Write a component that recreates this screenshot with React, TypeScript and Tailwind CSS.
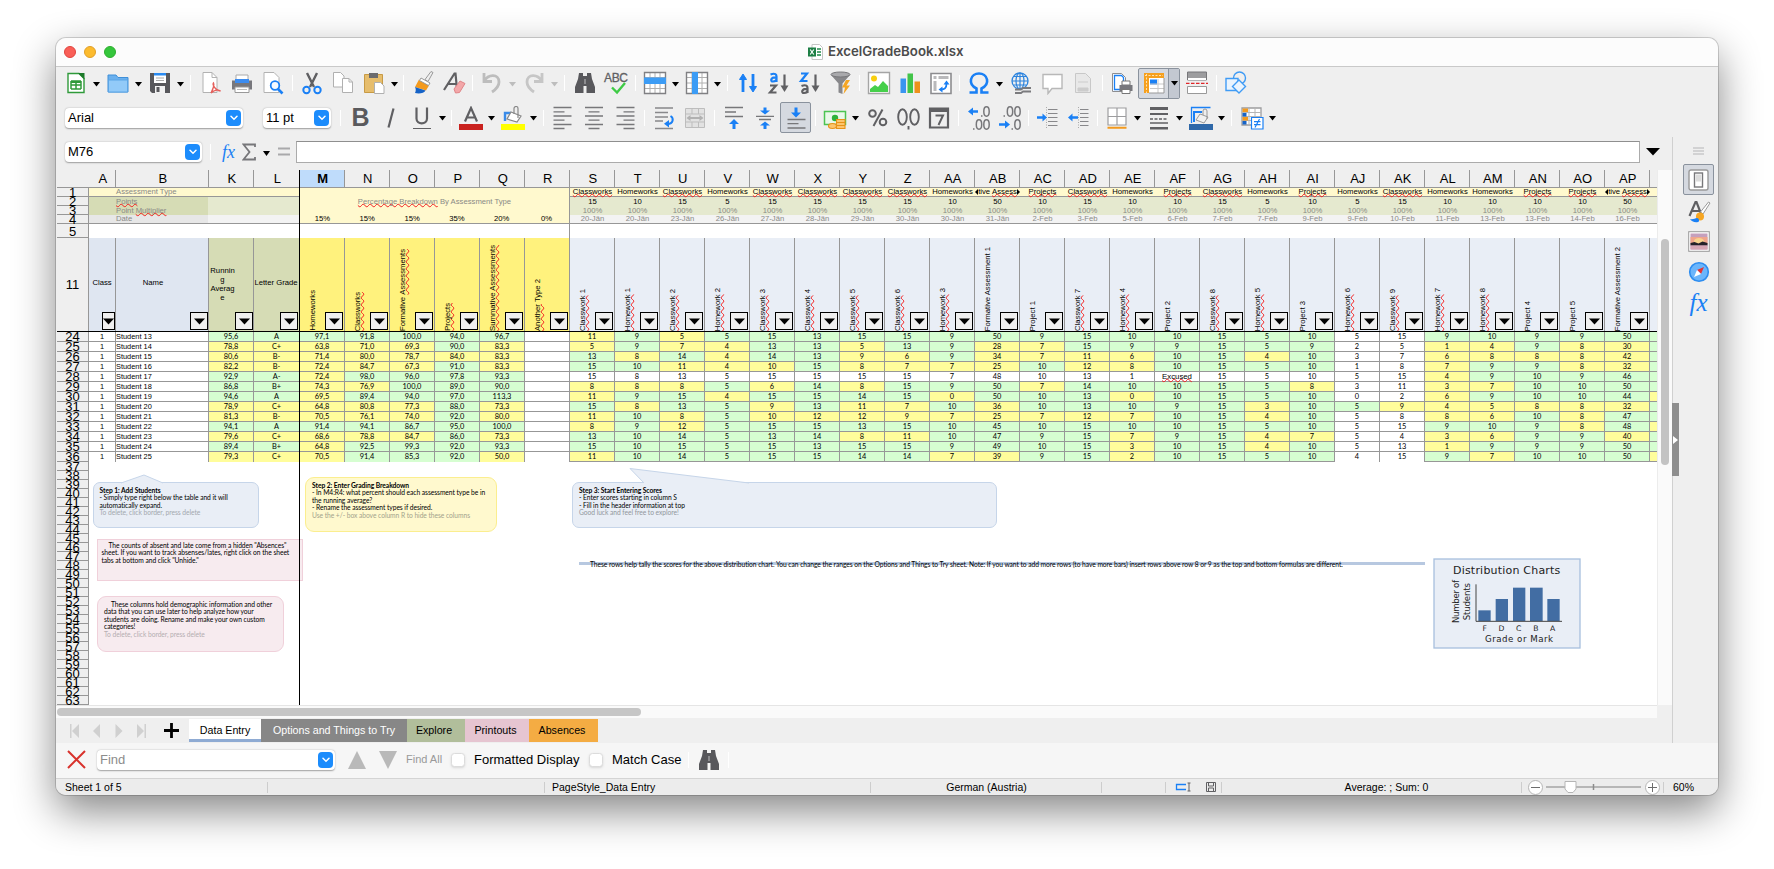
import type { ReactNode } from "react";

/* ---------- toolbar icons, 24 x 24 ---------- */

const G = "#606063";
const B = "#1a80f5";

const icons: Record<string, ReactNode> = {
  new: (
    <g>
      <path d="M4 2.500h11l5 5V21.500H4z" fill="#fff" stroke="#2f9a3a" strokeWidth="1.400" />
      <path d="M14 2l6.500 6.500V2z" fill="#1d7a2a" />
      <path d="M7 10h10M7 14h10M7 18h10M7 10v8M12 10v8M17 10v8" stroke="#2f9a3a" strokeWidth="1.500" />
      <path d="M7 10h10v2H7z" fill="#2f9a3a" />
    </g>
  ),
  open: (
    <g>
      <path d="M2 4h8l2 2.500h10V21H2z" fill="#6ab0ee" stroke="#3f8fd8" />
      <path d="M2.500 9h19v12h-19z" fill="#92caf8" stroke="#5ba5e6" />
    </g>
  ),
  save: (
    <g>
      <path d="M2 2h20v20H4l-2-2z" fill="#58585c" />
      <path d="M6 3h12v9H6z" fill="#fff" />
      <path d="M6 2h12v2.500H6z" fill="#2a8bf2" />
      <path d="M8 7h8M8 9.500h8" stroke="#aaa" />
      <path d="M7 15h10v7H7z" fill="#f2f2f2" />
      <path d="M8.500 16h3v5h-3z" fill="#58585c" />
    </g>
  ),
  pdf: (
    <g>
      <path d="M4 1.500h9l5 5v15H4z" fill="#fff" stroke="#b2b2b2" />
      <path d="M13 1.500v5h5" fill="none" stroke="#b2b2b2" />
      <path d="M12 22c2-4 3.500-8 2.500-10-1.200 1.500 1.500 7.500 7 8-3-1.500-7-.5-9.500 2z" fill="none" stroke="#e5605c" strokeWidth="1.400" />
    </g>
  ),
  print: (
    <g>
      <path d="M6 4h12v5H6z" fill="#fff" stroke="#aaa" />
      <path d="M2 9.500h20v9H2z" fill="#77777c" />
      <path d="M5 8h14v4H5z" fill="#3b8cf0" />
      <path d="M5 16h14v5.500H5z" fill="#fff" stroke="#999" />
      <path d="M7 18.500h10" stroke="#bbb" />
    </g>
  ),
  preview: (
    <g>
      <path d="M3 1.500h10l5 5v15H3z" fill="#fff" stroke="#b2b2b2" />
      <circle cx="14" cy="14.500" r="4.300" fill="#f5faff" stroke={B} strokeWidth="1.800" />
      <path d="M17 18l4.500 4.500" stroke={B} strokeWidth="2.600" />
    </g>
  ),
  cut: (
    <g fill="none">
      <path d="M7 2l7 14M17 2l-7 14" stroke={G} strokeWidth="2.400" />
      <circle cx="6.500" cy="19" r="3.200" stroke={B} strokeWidth="2" />
      <circle cx="17.500" cy="19" r="3.200" stroke={B} strokeWidth="2" />
    </g>
  ),
  copy: (
    <g fill="#fff" stroke="#b0b0b0">
      <path d="M2.500 1.500h7l3.500 3.500v11H2.500z" />
      <path d="M11.500 7.500h6.500l3.500 3.500v10.500h-10z" />
      <path d="M18 7.500V11h3.500" fill="none" />
    </g>
  ),
  paste: (
    <g>
      <path d="M2.500 3.500h18v18h-18z" fill="#e6bd6c" stroke="#c79a45" />
      <path d="M7 2h9v5H7z" fill="#6b6b6e" />
      <path d="M12.500 11.500h6l3.500 3.500v7.500h-9.500z" fill="#fff" stroke="#b0b0b0" />
    </g>
  ),
  brush: (
    <g>
      <path d="M20 .5l2 1-5 9-3-2z" fill="#eee" stroke="#999" />
      <path d="M8 8.500l10 6-3 5L4 16z" fill="#f39a1e" />
      <path d="M10 7l9 5-1.500 2.500-9-5z" fill="#fff" stroke="#999" />
      <path d="M4 16l10.500 3.500c-1 2.500-6 3.500-10.500 2.500 1-2 1-4 0-6z" fill="#1663c7" />
    </g>
  ),
  clear: (
    <g>
      <path d="M2 19L12.500 2.500h1l1.500 16M6.500 13h8" fill="none" stroke={G} strokeWidth="2.200" />
      <path d="M12 18l6-8 5 2.500-5.500 9-4 .5z" fill="#f3a7a9" stroke="#e08487" />
    </g>
  ),
  undo: (
    <path d="M4 2v8.500h8M4.500 10C8 3 19 2.500 19 11c0 5-4 8-7 10" fill="none" stroke="#bdbdbd" strokeWidth="2.800" />
  ),
  redo: (
    <path d="M20 2v8.500h-8M19.500 10C16 3 5 2.500 5 11c0 5 4 8 7 10" fill="none" stroke="#c6c6c6" strokeWidth="2.800" />
  ),
  find: (
    <g fill="#58585c">
      <path d="M6 2h4v3h4V2h4l1 6 3 8v6h-8.500v-7h-3v7H2v-6L5 8z" />
      <path d="M11 8h2v5h-2z" fill="#8c8c8f" />
    </g>
  ),
  row: (
    <g>
      <path d="M1.500 1.500h21v21h-21z" fill="#fff" />
      <path d="M2 6.500h20M2 12h20M2 17.500h20M7 2v20M12 2v20M17 2v20" stroke="#b0b0b0" />
      <path d="M1.500 1.500h21v21h-21z" fill="none" stroke="#808083" strokeWidth="1.400" />
      <path d="M1 6.500h22v6.500H1z" fill="#3c9cf5" />
    </g>
  ),
  col: (
    <g>
      <path d="M1.500 1.500h21v21h-21z" fill="#fff" />
      <path d="M2 6.500h20M2 12h20M2 17.500h20M7 2v20M12 2v20M17 2v20" stroke="#b0b0b0" />
      <path d="M1.500 1.500h21v21h-21z" fill="none" stroke="#808083" strokeWidth="1.400" />
      <path d="M7 1h6v22H7z" fill="#3c9cf5" />
    </g>
  ),
  sort: (
    <g stroke={B} strokeWidth="2.800" fill={B}>
      <path d="M7 21V7" />
      <path d="M3.500 8.500L7 3l3.500 5.500z" strokeWidth="1" />
      <path d="M17 3v14" />
      <path d="M13.500 15.500L17 21l3.500-5.500z" strokeWidth="1" />
    </g>
  ),
  az: (
    <g fill="none" strokeWidth="2.200">
      <path d="M3.500 3.500c5-2 6 .5 6 2v5.500M9.500 6.500c-6-.5-6.500 4-3.500 4 2 0 3.500-1 3.500-2.500" stroke={B} />
      <path d="M3 14.500h6L3 21.500h6.500" stroke={G} />
      <path d="M17.500 3.500v13" stroke={G} />
      <path d="M13.500 14.500h8l-4 6.500z" fill={G} />
    </g>
  ),
  za: (
    <g fill="none" strokeWidth="2.200">
      <path d="M3 2.500h6L3 10h6.500" stroke={B} />
      <path d="M3.500 15c5-2 6 .5 6 2v5M9.500 18c-6-.5-6.500 4-3.500 4 2 0 3.500-1 3.500-2.500" stroke={G} />
      <path d="M17.500 3.500v13" stroke={G} />
      <path d="M13.500 14.500h8l-4 6.500z" fill={G} />
    </g>
  ),
  filter: (
    <g>
      <path d="M2 4l7.500 8.500v9l4 1.500V12.500L21 4z" fill="#88888b" />
      <ellipse cx="11.500" cy="3.500" rx="9.500" ry="2.500" fill="#a9a9ac" stroke="#77777a" />
      <path d="M17 9l-4 7.500h3L14.500 23l6.500-8.500h-3.500L21 9z" fill="#f6a623" />
    </g>
  ),
  image: (
    <g>
      <path d="M1.500 1.500h21v21h-21z" fill="#fff" stroke="#a5a5a5" strokeWidth="1.400" />
      <circle cx="7" cy="7.500" r="3" fill="#f8cf10" />
      <path d="M3 21v-3l5-4 3 2 5-6 5 5v6z" fill="#46cf4b" />
    </g>
  ),
  chart: (
    <g>
      <path d="M2.500 7.500H8V22H2.500z" fill="#3a95f0" />
      <path d="M9.500 2.500H15V22H9.500z" fill="#42c449" />
      <path d="M16.500 10.500H22V22h-5.500z" fill="#ee921c" />
    </g>
  ),
  pivot: (
    <g>
      <path d="M2 2.500h20v20H2z" fill="#fff" stroke="#8c8c8f" strokeWidth="1.600" />
      <path d="M4.500 5h3v3h-3zM4.500 10h3v10h-3zM9.500 5h10v3h-10z" fill="#b9b9bb" />
      <path d="M12 18.500c4 0 5.500-1.500 5.500-6" fill="none" stroke={B} strokeWidth="1.800" />
      <path d="M13.500 15.500v6l-4-3zM14.500 13.500h6l-3-4z" fill={B} />
    </g>
  ),
  omega: (
    <path
      d="M2.500 21.500h7v-4C4.500 15 3.500 11 4 8.500 5.500.5 18.500.5 20 8.500c.5 2.500-.5 6.500-5.500 9v4h7"
      fill="none"
      stroke={B}
      strokeWidth="2.600"
    />
  ),
  globe: (
    <g fill="none">
      <circle cx="11" cy="10" r="8" stroke="#2d84de" strokeWidth="1.300" />
      <ellipse cx="11" cy="10" rx="4" ry="8" stroke="#2d84de" strokeWidth="1.200" />
      <path d="M3 10h16M4.500 5.500h13M4.500 14h13M11 2v16" stroke="#2d84de" strokeWidth="1.200" />
      <path d="M6 18.500h6l2-1.500h8M6 22h6l2-1.500h8" stroke="#7b7b7e" strokeWidth="1.800" />
    </g>
  ),
  comment: (
    <path d="M3 3.500h19v14H12l-4 5v-5H3z" fill="#fff" stroke="#b8b8b8" strokeWidth="1.400" />
  ),
  header: (
    <g>
      <path d="M4.500 2.500h10l5 5v14h-15z" fill="#e8e8e8" stroke="#c8c8c8" />
      <path d="M7 17h10v3H7zM7 11h10" fill="#ccc" stroke="#ccc" />
    </g>
  ),
  printarea: (
    <g>
      <path d="M2.500 2.500h9l4 4v14h-13z" fill="#fff" stroke="#8d8d90" />
      <path d="M4.500 4.500h7l2 2v12h-9z" fill="none" stroke={B} strokeWidth="1.300" />
      <path d="M12 10h8v4h-8z" fill="#fff" stroke="#777" />
      <path d="M9.500 14h13v6h-13z" fill="#77777c" />
      <path d="M12 18.500h8v4h-8z" fill="#fff" stroke="#777" />
    </g>
  ),
  freeze: (
    <g>
      <path d="M2 2h20v20H2z" fill="#fff" />
      <path d="M2 2h20v5H7v15H2z" fill="#f6a01e" />
      <path d="M3 4.500h18M4.500 3v19" stroke="#ffe3b0" strokeDasharray="2 1.500" />
      <path d="M8 8.500h7v5H8z" fill={B} />
      <path d="M8 17.500h14M16 8v14M8 13h14" stroke="#c9c9c9" />
      <path d="M22 7v15H7" fill="none" stroke="#999" />
    </g>
  ),
  split: (
    <g>
      <path d="M2.500 1h19v8h-19z" fill="#9d9d9f" stroke="#77777a" />
      <path d="M3 7h18v2H3z" fill="#fff" />
      <path d="M2.500 15.500h19v7h-19z" fill="#fff" stroke="#999" />
      <path d="M1 12.300h22" stroke="#e0262a" strokeWidth="1.300" strokeDasharray="3.500 1.500" />
    </g>
  ),
  shapes: (
    <g fill="#eaf4fe" stroke="#3f9bf5" strokeWidth="1.400">
      <circle cx="15.500" cy="7" r="6" fill="none" />
      <path d="M2 7.500h12v12H2z" />
      <path d="M15 9l6.500 6.500-6.500 6.500-6.500-6.500z" />
    </g>
  ),
  left: <path d="M2.500 1.500h18M2.500 5.800h11M2.500 10h18M2.500 14.200h11M2.500 18.500h18M2.500 22.500h11" stroke="#77777a" strokeWidth="1.300" />,
  center: <path d="M3 1.500h18M6.500 5.800h11M3 10h18M6.500 14.200h11M3 18.500h18M6.500 22.500h11" stroke="#77777a" strokeWidth="1.300" />,
  right: <path d="M3.500 1.500h18M10.500 5.800h11M3.500 10h18M10.500 14.200h11M3.500 18.500h18M10.500 22.500h11" stroke="#77777a" strokeWidth="1.300" />,
  wrap: (
    <g fill="none">
      <path d="M3 2h18M3 6.500h13M3 11h13M3 15h8M3 22.500h18" stroke="#88888b" strokeWidth="1.300" />
      <path d="M18.500 10c3.500 2 3 8-3 8" stroke={B} strokeWidth="2" />
      <path d="M17 14v7.500l-5-3.800z" fill={B} />
    </g>
  ),
  merge: (
    <g>
      <path d="M2.500 2.500h19v19h-19z" fill="#e2e2e2" stroke="#bdbdbd" />
      <path d="M2.500 8h19M2.500 16h19M9 2.500V8M15.500 2.500V8M9 16v5.500M15.500 16v5.500" stroke="#bdbdbd" />
      <path d="M3.500 12l4-3v2h9V9l4 3-4 3v-2h-9v2z" fill="#b1b1b1" />
    </g>
  ),
  top: (
    <g>
      <path d="M3 1.500h18M3 6h11M3 10.500h18" stroke="#77777a" strokeWidth="1.300" />
      <path d="M12 13l5 5h-3.500v5h-3v-5H7z" fill={B} />
    </g>
  ),
  mid: (
    <g>
      <path d="M3 10.300h18M6 13.500h12" stroke="#77777a" strokeWidth="1.300" />
      <path d="M12 8.500l5-4h-3.500v-3h-3v3H7zM12 15.500l5 4h-3.500V23h-3v-3.500H7z" fill={B} />
    </g>
  ),
  bottom: (
    <g>
      <path d="M3.500 13.500h18M3.500 17.700h11M3.500 22h18" stroke="#77777a" strokeWidth="1.300" />
      <path d="M12 11.500l5-5h-3.500v-5h-3v5H7z" fill={B} />
    </g>
  ),
  currency: (
    <g>
      <path d="M1.500 5.500h21v13h-21z" fill="#eaf8ea" stroke="#4cc452" strokeWidth="1.500" />
      <circle cx="12" cy="12" r="3.200" fill="#2fb23a" />
      <g fill="#fcc56e" stroke="#e89318" strokeWidth="1.100">
        <ellipse cx="9.500" cy="20" rx="4" ry="2.500" />
        <path d="M13.500 13.500h8.500v9h-8.500z" />
        <path d="M13.500 16.500H22M13.500 19.500H22" />
      </g>
    </g>
  ),
  percent: (
    <g fill="none" stroke={G} strokeWidth="2">
      <circle cx="7.500" cy="7.500" r="3.300" />
      <circle cx="18" cy="16" r="3.300" />
      <path d="M17.500 3.500L8.500 20" />
    </g>
  ),
  number: (
    <g fill="none" stroke={G} strokeWidth="1.900">
      <ellipse cx="6.500" cy="11" rx="4.300" ry="7.700" />
      <ellipse cx="18.500" cy="11" rx="4.300" ry="7.700" />
      <path d="M12.500 20v3.500" />
    </g>
  ),
  date: (
    <g>
      <path d="M3 2.500h18v19H3z" fill="none" stroke={G} strokeWidth="2.200" />
      <path d="M2 2h20v4H2z" fill={G} />
      <path d="M8.500 9.500h7.500l-4.500 9.500" fill="none" stroke={G} strokeWidth="2" />
    </g>
  ),
  decadd: (
    <g>
      <path d="M1 5.500l5-4v2.800h5v2.400H6v2.800z" fill={B} />
      <g fill="none" stroke="#77777a" strokeWidth="1.500">
        <ellipse cx="19.500" cy="5.500" rx="2.700" ry="4.700" />
        <ellipse cx="12" cy="18.500" rx="2.700" ry="4.700" />
        <ellipse cx="19.500" cy="18.500" rx="2.700" ry="4.700" />
        <path d="M14 10h1.500M6 23h1.500" />
      </g>
    </g>
  ),
  decdel: (
    <g>
      <path d="M12 18.500l-5-4v2.800H1v2.400h6v2.800z" fill={B} />
      <g fill="none" stroke="#77777a" strokeWidth="1.500">
        <ellipse cx="12" cy="5.500" rx="2.700" ry="4.700" />
        <ellipse cx="19.500" cy="5.500" rx="2.700" ry="4.700" />
        <ellipse cx="19.500" cy="18.500" rx="2.700" ry="4.700" />
        <path d="M5.500 10H7M13.500 23H15" />
      </g>
    </g>
  ),
  indent: (
    <g>
      <path d="M10.500 1v22" stroke="#aaa" strokeDasharray="1 1.500" />
      <path d="M12 3.500h9.500M12 7.500h9.500M12 11.500h9.500M12 15.500h9.500M12 19.500h9.500" stroke="#88888b" strokeWidth="1.200" />
      <path d="M11 11.500l-4.500-4v2.800H1v2.400h5.500v2.800z" fill={B} />
    </g>
  ),
  outdent: (
    <g>
      <path d="M11.500 1v22" stroke="#aaa" strokeDasharray="1 1.500" />
      <path d="M13 3.500h8.500M13 7.500h8.500M13 11.500h8.500M13 15.500h8.500M13 19.500h8.500" stroke="#88888b" strokeWidth="1.200" />
      <path d="M1 11.500l4.500-4v2.800H11v2.400H5.500v2.800z" fill={B} />
    </g>
  ),
  borders: (
    <g>
      <path d="M3 2h18v17H3z" fill="#fff" stroke="#9d9d9f" strokeWidth="1.200" />
      <path d="M12 2v17M3 10.500h18" stroke="#9d9d9f" strokeWidth="1.200" />
      <path d="M2.500 21.800h19" stroke="#f39a1e" strokeWidth="2" />
    </g>
  ),
  lines: (
    <g stroke={G}>
      <path d="M3 2.500h18" strokeWidth="3" />
      <path d="M3 8h18" strokeWidth="2" />
      <path d="M3 13h18" strokeWidth="1.300" strokeDasharray="3 1.500" />
      <path d="M3 17h18" strokeWidth="1.300" />
      <path d="M3 22.200h18" strokeWidth="2.600" />
    </g>
  ),
  bordercolor: (
    <g>
      <path d="M2.500 17V1.500h19" fill="none" stroke={B} strokeWidth="1.300" />
      <path d="M5 16V6h8" fill="none" stroke={B} strokeWidth="2" />
      <path d="M11 8l8 3-4 6-8-3z" fill="#f1f1f1" stroke="#999" />
      <path d="M14 9V5a2 2 0 014 0v8" fill="none" stroke="#999" />
      <path d="M0 18h24v6H0z" fill="#2f68a8" />
    </g>
  ),
  cond: (
    <g>
      <path d="M2 2h19v17H2z" fill="#fff" stroke="#9d9d9f" strokeWidth="1.300" />
      <path d="M2 6.500h19M2 10.500h19M2 14.500h19M9 2v17M15 2v17" stroke="#b5b5b5" />
      <path d="M2.500 2.500H8V6H2.500zM2.500 11H8v3.500H2.500z" fill="#f39a1e" />
      <path d="M2.500 7h4v3.500h-4zM2.500 15h4v3.500h-4z" fill="#1663c7" />
      <path d="M11.500 11.500H23V23H11.500z" fill="#fff" stroke={B} strokeWidth="1.200" />
      <path d="M14 15.700h6.500M14 18.700h6.500M19.500 13l-4.500 8.500" stroke={B} strokeWidth="1.200" />
    </g>
  ),
};

const Ico = ({ n, wide }: { n: string; wide?: string }) => (
  <span className={`flex shrink-0 items-center justify-center ${wide ?? "w-[31px]"}`}>
    <svg width="24" height="24" viewBox="0 0 24 24">{icons[n]}</svg>
  </span>
);

const Down = ({ dim }: { dim?: boolean }) => (
  <span className="flex w-[11px] shrink-0 justify-center">
    <svg width="7" height="5" viewBox="0 0 7 5" className="mt-0.5 mr-px">
      <path d="M0 0h7L3.500 4.500z" fill={dim ? "#bdbdbd" : "#000"} />
    </svg>
  </span>
);

const sepWidths = { 7: "w-[7px]", 8: "w-2", 9: "w-[9px]" } as const;
const Sep = ({ w = 8 }: { w?: 7 | 8 | 9 }) => (
  <span className={`flex shrink-0 justify-center ${sepWidths[w]}`}>
    <span className="h-4 w-px bg-white" />
  </span>
);

const Chevron = ({ className }: { className: string }) => (
  <span className={`flex items-center justify-center rounded-[4px] bg-[#1c8cfc] ${className}`}>
    <svg width="8" height="6" viewBox="0 0 8 6">
      <path d="M1 1.300l3 3 3-3" fill="none" stroke="#fff" strokeWidth="1.500" strokeLinecap="round" />
    </svg>
  </span>
);

const Combo = ({ text, className }: { text: string; className: string }) => (
  <div className={`flex h-5 shrink-0 items-center justify-between rounded-[4px] bg-white pl-[3px] pr-[2px] shadow-[0_0.500px_1.500px_rgba(0,0,0,0.35)] ${className}`}>
    <span className="text-[13px] leading-none">{text}</span>
    <Chevron className="h-4 w-[15px]" />
  </div>
);

/* ---------- sheet data ---------- */

const frozenCols = ["M", "N", "O", "P", "Q", "R"];
const types = "CHCHCCCCHSPCHPCHPHCHHPPS";
const typeNames: Record<string, string> = { C: "Classworks", H: "Homeworks", P: "Projects", S: "tive Assess" };
const scoreCols = "S T U V W X Y Z AA AB AC AD AE AF AG AH AI AJ AK AL AM AN AO AP".split(" ");
const points = "15 10 15 5 15 15 15 15 10 50 10 15 10 10 15 5 10 5 15 10 10 10 10 50".split(" ");
const dates =
  "20-Jän 20-Jän 23-Jän 26-Jän 27-Jän 28-Jän 29-Jän 30-Jän 30-Jän 31-Jän 2-Feb 3-Feb 5-Feb 6-Feb 7-Feb 7-Feb 9-Feb 9-Feb 10-Feb 11-Feb 13-Feb 13-Feb 14-Feb 16-Feb".split(" ");
const titles = [
  "Classwork 1", "Homework 1", "Classwork 2", "Homework 2", "Classwork 3", "Classwork 4", "Classwork 5", "Classwork 6",
  "Homework 3", "Formative Assessment 1", "Project 1", "Classwork 7", "Homework 4", "Project 2", "Classwork 8",
  "Homework 5", "Project 3", "Homework 6", "Classwork 9", "Homework 7", "Homework 8", "Project 4", "Project 5",
  "Formative Assessment 2",
];

/* suffix: y = yellow, w = white, none = green */
const averages = [
  "95,6 A 97,1 91,8 100,0 94,0 96,7",
  "78,8y C+y 63,8y 71,0y 69,3y 90,0 83,3y",
  "80,6y B-y 71,4y 80,0y 78,7y 84,0y 83,3y",
  "82,2y B-y 72,4y 84,7y 67,3y 91,0 83,3y",
  "92,9 A- 72,4y 98,0 96,0 97,8 93,3",
  "86,8 B+ 74,3y 76,9y 100,0 89,0 90,0",
  "94,6 A 69,5y 89,4 94,0 97,0 113,3",
  "78,9y C+y 64,8y 80,8y 77,3y 88,0 73,3y",
  "81,3y B-y 70,5y 76,1y 74,0y 92,0 80,0y",
  "94,1 A 91,4 94,1 86,7 95,0 100,0",
  "79,6y C+y 68,6y 78,8y 84,7y 86,0 73,3y",
  "89,4 B+ 64,8y 92,5 99,3 92,0 93,3",
  "79,3y C+y 70,5y 91,4 85,3 92,0 50,0y",
];
const scores = [
  "11y 9 5y 5 15 13 15 15 9 50 9 15 10 10 15 5 10 5w 15w 9 10 9 9 50 g",
  "5y 9 7y 4y 13 13 5y 13 9 28y 7y 15 9 9 15 5 9 2w 5w 1y 4y 9 8y 30y g",
  "13 8y 14 4y 14 13 9y 6y 9 34y 7y 11y 6y 10 15 4y 10 3w 7w 6y 8y 8y 8y 42y g",
  "15 10 11y 4y 10y 15 8y 7y 7y 25y 10 12y 8y 10 15 5 10 1w 8w 7y 9 9 8y 32y g",
  "15w 8w 13w 5w 15w 15w 15w 15w 7w 48w 10w 13w 1w Excusedw 15w 5w 10w 5w 15w 4y 9 10 9 46 g",
  "8y 8y 8y 5 6y 14 8y 15 9 50 7y 14 10 10 15 5 8y 3w 11w 3y 7y 10 10 50 g",
  "11y 9 15 4y 15 15 14 15 0y 50 10 13 0y 10 15 5 10 0w 2w 6y 9 10 10 44 y",
  "15 8y 13 5 9y 13 11y 7y 10 36y 10 13 10 9 15 3y 10 5 9y 4y 5y 8y 8y 32y g",
  "11y 10 8y 5 10y 12y 12y 9y 7y 25y 7y 12y 7y 10 15 4y 10 5w 8w 8y 6y 10 8y 47 g",
  "8y 9 12y 5 15 15 13 15 10 45 10 15 10 10 15 5 10 5w 15w 9 10 9 8y 48 y",
  "13 10 14 5 13 14 8y 11y 10 47 9 15 7y 9 15 4y 7y 5w 4w 3y 6y 9 9 40y g",
  "15 10 15 5 15 13 15 15 9 49 10 15 3y 10 15 4y 10 5w 13w 1y 9 9 9 50 g",
  "11y 10 14 5 15 15 14 14 7y 39y 9 15 2y 10 15 5 10 4w 15w 9 7y 10 10 50 y",
];

const wavy = "underline decoration-wavy decoration-[#f02020] decoration-[1px] underline-offset-[-1px] [text-decoration-skip-ink:none]";
const wavyUp = "underline decoration-wavy decoration-[#f02020] decoration-[1px] underline-offset-[-2px] [text-decoration-skip-ink:none]";
const line = "border-[#979797]";

const Score = ({ raw, last, noBottom, wide }: { raw: string; last?: boolean; noBottom?: boolean; wide?: string }) => {
  const tone = raw.endsWith("y") ? "bg-[#fffd9b]" : raw.endsWith("w") ? "bg-white" : "bg-[#d6fed1]";
  const text = raw.replace(/[yw]$/, "");
  return (
    <div
      className={`flex h-[10px] shrink-0 items-center justify-center border-r ${line} ${last && noBottom ? "" : "border-b"} ${tone} ${wide ?? "w-[45px]"} font-['Lato'] text-[7.400px] leading-none`}
    >
      {text === "Excused" ? <span className={`relative z-10 font-['Liberation_Sans'] text-[7.800px] ${wavy}`}>{text}</span> : text}
    </div>
  );
};

const Filter = ({ narrow }: { narrow?: boolean }) => (
  <div className={`mb-px flex h-[18px] shrink-0 items-center justify-center overflow-hidden border-[1.500px] border-black bg-[#efefef] ${narrow ? "w-[13px]" : "w-[18px]"}`}>
    <svg width="11" height="7" viewBox="0 0 11 7" className="shrink-0">
      <path d="M0 .5h11L5.500 6.500z" fill="#000" />
    </svg>
  </div>
);

const Vertical = ({ text, tone }: { text: string; tone: string }) => {
  const bad = /^(Class|Home)work \d|^Classworks|^Projects/.test(text)
    ? text.split(" ")[0]
    : text === "Formative Assessments"
      ? "Assessments"
      : text === "Summative Assessments"
        ? text
        : text === "Another Type 2"
          ? "Another"
          : "";
  const [before, after] = bad ? [text.slice(0, text.indexOf(bad)), text.slice(text.indexOf(bad) + bad.length)] : [text, ""];
  return (
    <div className={`flex h-[93px] w-[45px] shrink-0 items-end justify-between overflow-hidden border-r ${line} ${tone} pl-[8px] pr-px`}>
      <span className="rotate-180 whitespace-nowrap text-[7.700px] leading-[10px] [writing-mode:vertical-rl]">
        {before}
        {bad && <span className={wavyUp}>{bad}</span>}
        {after}
      </span>
      <Filter />
    </div>
  );
};

const center = "flex items-center justify-center";
const small = "text-[7.700px] leading-none whitespace-nowrap";

const RowHeads = () => (
  <div className="flex w-8 shrink-0 flex-col bg-[#efefef] text-[13px] leading-none">
    <div className={`h-[18px] border-b ${line}`} />
    {["1", "2", "3", "4"].map((n) => (
      <div key={n} className={`h-[9px] border-r border-b ${line} ${center}`}>{n}</div>
    ))}
    <div className={`h-[14px] border-r border-b ${line} pt-0.5 ${center}`}>5</div>
    <div className={`h-[93px] border-r ${line} ${center}`}>11</div>
    <div className="h-px bg-black" />
    {averages.map((_, i) => (
      <div key={i} className={`h-[10px] border-r border-b ${line} ${center}`}>{24 + i}</div>
    ))}
    {Array.from({ length: 27 }, (_, i) => (
      <div key={i} className={`h-[9px] border-r border-b ${line} ${center}`}>{37 + i}</div>
    ))}
  </div>
);

const ColHead = ({ n, w, on }: { n: string; w: string; on?: boolean }) => (
  <div className={`h-[18px] shrink-0 border-r border-b ${line} pl-[1.500px] ${center} ${w} ${on ? "bg-[#bfdcfb] font-bold" : "bg-[#efefef]"}`}>{n}</div>
);

const TopRows = () => (
  <>
    <div className="flex h-[18px] bg-[#efefef] text-[13px] leading-none">
      <ColHead n="A" w="w-[27px]" />
      <ColHead n="B" w="w-[93px]" />
      <ColHead n="K" w="w-[45px]" />
      <ColHead n="L" w="w-[46px]" />
      {frozenCols.map((c) => <ColHead key={c} n={c} w="w-[45px]" on={c === "M"} />)}
      {scoreCols.map((c) => <ColHead key={c} n={c} w="w-[45px]" />)}
      <div className={`w-[7px] border-b ${line}`} />
    </div>

    <div className={`flex h-9 border-b ${line} text-[#8a8a86] ${small}`}>
      <div className="flex w-[211px] shrink-0 flex-col">
        <div className={`flex h-[9px] items-center border-b ${line} bg-[#fff9ce] pl-[27px]`}>Assessment Type</div>
        <div className="flex h-[9px]">
          <div className="flex w-[119px] items-center bg-[#d6dcb5] pl-[27px]"><span className={`relative z-10 ${wavy}`}>Points</span></div>
          <div className="flex-1 bg-[#e5e9cf]" />
        </div>
        <div className="flex h-[9px]">
          <div className="flex w-[119px] items-center bg-[#d6dcb5] pl-[27px]">Point&nbsp;<span className={`relative z-10 ${wavy}`}>Multiplier</span></div>
          <div className="flex-1 bg-[#e5e9cf]" />
        </div>
        <div className="flex h-[8px]">
          <div className="flex w-[119px] items-center bg-[#e7e7e7] pl-[27px]">Date</div>
          <div className="flex-1 bg-[#f3f3f3]" />
        </div>
      </div>
      <div className={`flex w-[270px] shrink-0 flex-col border-r ${line} bg-[#fff9ce]`}>
        <div className="flex h-[27px] items-center justify-center pt-px">
          <span><span className={wavy}>Percentage Breakdown</span> By Assessment Type</span>
        </div>
        <div className="flex h-[8px] text-black">
          {["15%", "15%", "15%", "35%", "20%", "0%"].map((p, i) => <span key={i} className={`w-[45px] ${center}`}>{p}</span>)}
        </div>
      </div>
      {scoreCols.map((c, i) => (
        <div key={c} className="flex w-[45px] shrink-0 flex-col">
          <div className={`relative z-10 h-[9px] border-b ${line} bg-[#fff9ce] text-black ${center}`}>
            {types[i] === "S" ? (
              <span className="flex items-center">
                <svg width="3" height="6"><path d="M3 0v6L0 3z" /></svg>
                tive <span className={`ml-0.5 ${wavy}`}>Assess</span>
                <svg width="3" height="6"><path d="M0 0v6l3-3z" /></svg>
              </span>
            ) : (
              <span className={types[i] === "H" ? "" : wavy}>{typeNames[types[i]]}</span>
            )}
          </div>
          <div className={`h-[9px] bg-[#e5e9cf] text-black ${center}`}>{points[i]}</div>
          <div className={`h-[9px] bg-[#e5e9cf] ${center}`}>100%</div>
          <div className={`h-[8px] bg-[#f3f3f3] ${center}`}>{dates[i]}</div>
        </div>
      ))}
      <div className="w-[7px]">
        <div className={`h-[9px] border-b ${line} bg-[#fff9ce]`} />
        <div className="h-[18px] bg-[#e5e9cf]" />
        <div className="h-[8px] bg-[#f3f3f3]" />
      </div>
    </div>

    <div className="flex h-[14px]">
      <div className={`w-[481px] border-r ${line}`} />
    </div>

    <div className={`flex h-[94px] border-b border-black ${small}`}>
      <div className={`flex w-[27px] shrink-0 flex-col border-r ${line} bg-[#dfe6f1]`}>
        <div className={`h-full pt-[16px] ${center}`}>Class</div>
        <div className="flex justify-end"><Filter narrow /></div>
      </div>
      <div className={`flex w-[93px] shrink-0 flex-col border-r ${line} bg-[#dfe6f1]`}>
        <div className={`h-full pt-[16px] pr-[18px] ${center}`}>Name</div>
        <div className="flex justify-end"><Filter /></div>
      </div>
      <div className={`flex w-[45px] shrink-0 flex-col border-r ${line} bg-[#d6dcb5]`}>
        <div className={`h-full flex-col pt-[17px] pr-[17px] leading-[9px] ${center}`}><span>Runnin</span><span>g</span><span>Averag</span><span>e</span></div>
        <div className="flex justify-end"><Filter /></div>
      </div>
      <div className="flex w-[46px] shrink-0 flex-col bg-[#d6dcb5] pr-[2px]">
        <div className={`h-full pt-[16px] ${center}`}>Letter Grade</div>
        <div className="flex justify-end"><Filter /></div>
      </div>
      {["Homeworks", "Classworks", "Formative Assessments", "Projects", "Summative Assessments", "Another Type 2"].map((t) => (
        <Vertical key={t} text={t} tone="bg-[#fff27d]" />
      ))}
      {titles.map((t) => <Vertical key={t} text={t} tone="bg-[#e9eef6]" />)}
      <div className="w-[7px] bg-[#e9eef6]" />
    </div>
  </>
);

const DataRows = () => (
  <>
    {averages.map((avg, r) => {
      const last = r === averages.length - 1;
      return (
        <div key={r} className="flex h-[10px]">
          <div className={`w-[27px] shrink-0 border-r ${line} ${last ? "" : "border-b"} text-[7.400px] leading-none ${center}`}>1</div>
          <div className={`flex w-[93px] shrink-0 items-center border-r ${line} ${last ? "" : "border-b"} text-[7.400px] leading-none`}>Student {13 + r}</div>
          {avg.split(" ").map((raw, i) => <Score key={i} raw={raw} last={last} noBottom wide={i === 1 ? "w-[46px]" : undefined} />)}
          <div className={`w-[45px] shrink-0 border-r ${line} ${last ? "" : "border-b"}`} />
          {scores[r].split(" ").map((raw, i) =>
            i < 24 ? (
              <Score key={i} raw={raw} last={last} noBottom={i === 17 || i === 18} />
            ) : (
              <div key={i} className={`w-[7px] shrink-0 border-b ${line} ${raw === "y" ? "bg-[#fffd9b]" : "bg-[#d6fed1]"}`} />
            ),
          )}
        </div>
      );
    })}
  </>
);

/* ---------- notes floating over the sheet ---------- */

const note = "absolute font-['Lato'] text-[6.700px] leading-[7.400px] whitespace-nowrap text-black tracking-[-0.050px]";

const Notes = () => (
  <>
    <div className={`${note} top-[312px] left-[36px] h-[46px] w-[166px] rounded-[7px] border border-[#c6d5e9] bg-[#e9eef6] pt-[4px] pl-[5.500px]`}>
      <svg width="42" height="10" viewBox="0 0 42 10" className="absolute -top-[9px] left-[27px]">
        <path d="M0 9L23 1l19 8v1H0z" fill="#e9eef6" />
        <path d="M0 9L23 1l19 8" fill="none" stroke="#c6d5e9" />
      </svg>
      <div className="font-bold">Step 1: Add Students</div>
      <div>- Simply type right below the table and it will</div>
      <div>automatically expand.</div>
      <div className="text-[#a3a8ae]">To delete, click border, press delete</div>
    </div>
    <div className={`${note} top-[307px] left-[248px] h-[55px] w-[192px] rounded-[9px] border border-[#fbee8f] bg-[#fff9ce] pt-[4px] pl-[6px]`}>
      <div className="font-bold">Step 2: Enter Grading Breakdown</div>
      <div>- In M4:R4: what percent should each assessment type be in</div>
      <div>the running average?</div>
      <div>- Rename the assessment types if desired.</div>
      <div className="text-[#a3a38c]">Use the +/- box above column R to hide these columns</div>
    </div>
    <div className={`${note} top-[312px] left-[515px] h-[46px] w-[425px] rounded-[7px] border border-[#c6d5e9] bg-[#e9eef6] pt-[4px] pl-[6px]`}>
      <svg width="122" height="17" viewBox="0 0 122 17" className="absolute -top-[16px] left-[56px]">
        <path d="M15 16L1 1.500 120 16v1H15z" fill="#e9eef6" />
        <path d="M15 16L1 1.500 120 16" fill="none" stroke="#c6d5e9" />
      </svg>
      <div className="font-bold">Step 3: Start Entering Scores</div>
      <div>- Enter scores starting in column S</div>
      <div>- Fill in the header information at top</div>
      <div className="text-[#92979d]">Good luck and feel free to explore!</div>
    </div>
    <div className={`${note} top-[369px] left-[40px] h-[42px] w-[206px] border border-[#f0d0da] bg-[#f7ebef] pt-[2px] pl-[3.500px]`}>
      <div className="pl-[7px]">The counts of absent and late come from a hidden &quot;Absences&quot;</div>
      <div>sheet. If you want to track absenses/lates, right click on the sheet</div>
      <div>tabs at bottom and click &quot;Unhide.&quot;</div>
    </div>
    <div className={`${note} top-[426px] left-[40px] h-[56px] w-[187px] rounded-[9px] border border-[#f0d0da] bg-[#f7ebef] pt-[4px] pl-[6px]`}>
      <div className="pl-[7px]">These columns hold demographic information and other</div>
      <div>data that you can use later to help analyze how your</div>
      <div>students are doing. Rename and make your own custom</div>
      <div>categories!</div>
      <div className="text-[#b5aeb1]">To delete, click border, press delete</div>
    </div>
    <div className="absolute top-[392px] left-[522px] h-[2.500px] w-[846px] bg-[#b7c8e0]" />
    <div className={`${note} top-[391px] left-[533px]`}>
      These rows help tally the scores for the above distribution chart. You can change the ranges on the Options and Things to Try sheet. Note: If you want to add more rows (to have more bars) insert rows above row 8 or 9 as the top and bottom formulas are different.
    </div>
    <svg className="absolute top-[388px] left-[1376px]" width="148" height="91" viewBox="0 0 444 273" fontFamily="DejaVu Sans" fill="#222">
      <rect x="3" y="3" width="438" height="267" fill="#e9eef6" stroke="#a9c0de" strokeWidth="4" />
      <text x="60" y="47" fontSize="33" textLength="322">Distribution Charts</text>
      <text transform="translate(77 195) rotate(-90)" fontSize="26" textLength="129">Number of</text>
      <text transform="translate(110 187) rotate(-90)" fontSize="26" textLength="112">Students</text>
      <g fill="#426da3">
        <rect x="136" y="157" width="37" height="32" />
        <rect x="188" y="123" width="37" height="66" />
        <rect x="240" y="89" width="37" height="100" />
        <rect x="291" y="89" width="38" height="100" />
        <rect x="343" y="123" width="37" height="66" />
      </g>
      <path d="M129 79v111h258" fill="none" stroke="#444" strokeWidth="3" />
      <g fontSize="23" textAnchor="middle">
        <text x="155" y="219">F</text>
        <text x="205" y="219">D</text>
        <text x="257" y="219">C</text>
        <text x="309" y="219">B</text>
        <text x="359" y="219">A</text>
      </g>
      <text x="156" y="252" fontSize="26" textLength="204">Grade or Mark</text>
    </svg>
  </>
);

/* ---------- window parts ---------- */

const Toolbars = () => (
  <>
    <div className="flex h-[33px] items-center pb-px pl-1">
      <Ico n="new" /><Down /><Ico n="open" /><Down /><Ico n="save" /><Down /><Sep w={9} />
      <Ico n="pdf" /><Ico n="print" /><Ico n="preview" /><Sep w={8} />
      <Ico n="cut" /><Ico n="copy" /><Ico n="paste" /><Down /><Sep w={7} />
      <Ico n="brush" /><Ico n="clear" /><Sep w={7} />
      <Ico n="undo" /><Down dim /><Ico n="redo" /><Down dim /><Sep w={9} />
      <Ico n="find" />
      <span className="flex w-[31px] shrink-0 justify-center">
        <svg width="26" height="24" viewBox="0 0 26 24" fontFamily="Liberation Sans">
          <text x="1" y="11" fontSize="12" fill={G} stroke={G} strokeWidth="0.300" textLength="24">ABC</text>
          <path d="M9 16.500l5 5L22 12" fill="none" stroke="#3fcb46" strokeWidth="2.400" />
        </svg>
      </span>
      <Sep w={8} />
      <Ico n="row" /><Down /><Ico n="col" /><Down /><Sep w={9} />
      <Ico n="sort" /><Ico n="az" /><Ico n="za" /><Ico n="filter" /><Sep w={7} />
      <Ico n="image" /><Ico n="chart" /><Ico n="pivot" /><Sep w={7} />
      <Ico n="omega" /><Down /><Ico n="globe" /><Ico n="comment" /><Ico n="header" /><Sep w={8} />
      <Ico n="printarea" />
      <div className="mx-px flex h-[31px] w-[42px] shrink-0 items-center rounded-[2px] border border-[#8a929d] bg-[#d5d9e0]">
        <Ico n="freeze" wide="w-[29px]" />
        <span className="flex h-full flex-1 items-center justify-center border-l border-[#8a929d] bg-[#c3c8d1]">
          <svg width="7" height="5"><path d="M0 0h7L3.500 4.500z" /></svg>
        </span>
      </div>
      <Ico n="split" /><Sep w={8} />
      <Ico n="shapes" />
    </div>

    <div className="flex h-[35px] items-center pl-[9px]">
      <Combo text="Arial" className="w-[178px]" />
      <Combo text="11 pt" className="ml-[20px] w-[68px]" />
      <span className="ml-[5px]"><Sep w={9} /></span>
      <span className="flex w-[31px] shrink-0 justify-center text-[25px] leading-none font-bold text-[#5a5a5d]">B</span>
      <span className="flex w-[30px] shrink-0 justify-center">
        <svg width="12" height="24"><path d="M8.500 2.500l-5 19" stroke={G} strokeWidth="2.200" /></svg>
      </span>
      <span className="flex w-[31px] shrink-0 justify-center">
        <svg width="20" height="24">
          <path d="M4.500 1.500v11c0 6.500 10.500 6.500 10.500 0v-11" fill="none" stroke={G} strokeWidth="2.200" />
          <path d="M1 22.500h18" stroke={G} strokeWidth="1.200" />
        </svg>
      </span>
      <Down /><Sep w={7} />
      <span className="flex w-[31px] shrink-0 justify-center">
        <svg width="24" height="24">
          <path d="M6 15.500l6-13.500 6 13.500M8 11.500h8" fill="none" stroke={G} strokeWidth="2.200" />
          <path d="M0 18h24v6H0z" fill="#c9211e" />
        </svg>
      </span>
      <Down />
      <span className="flex w-[31px] shrink-0 justify-center">
        <svg width="24" height="24">
          <path d="M4 15V7h6" fill="none" stroke="#3a8be8" strokeWidth="2.400" />
          <path d="M10 6l10 4-4 6-10-3z" fill="#fff" stroke="#888" strokeWidth="1.200" />
          <path d="M13 8V2.500a2 2 0 014 0V12" fill="none" stroke="#888" strokeWidth="1.200" />
          <path d="M0 18h24v6H0z" fill="#ffff00" />
        </svg>
      </span>
      <Down /><Sep w={8} />
      <Ico n="left" /><Ico n="center" /><Ico n="right" /><Sep w={8} />
      <Ico n="wrap" /><Ico n="merge" /><Sep w={8} />
      <Ico n="top" /><Ico n="mid" />
      <span className="flex h-[31px] w-[31px] shrink-0 items-center justify-center rounded-[2px] border border-[#8a929d] bg-[#d5d9e0]">
        <Ico n="bottom" wide="w-6" />
      </span>
      <Sep w={8} />
      <Ico n="currency" /><Down /><Ico n="percent" /><Ico n="number" /><Ico n="date" /><Sep w={9} />
      <Ico n="decadd" /><Ico n="decdel" /><Sep w={7} />
      <Ico n="indent" /><Ico n="outdent" /><Sep w={7} />
      <Ico n="borders" /><Down /><Ico n="lines" /><Down /><Ico n="bordercolor" /><Down /><Sep w={9} />
      <Ico n="cond" /><Down />
    </div>
  </>
);

const FormulaBar = () => (
  <div className="flex h-[35px] shrink-0 items-center pb-[2px] pl-[9px]">
    <Combo text="M76" className="w-[137px]" />
    <span className="ml-1"><Sep w={9} /></span>
    <span className="ml-[7px] w-[18px] font-['Liberation_Serif'] text-[18px] leading-none text-[#1a80f5] italic">fx</span>
    <svg width="14" height="18" className="ml-[2px]">
      <path d="M13 4V1.500H1.500L7.500 9l-6 7.500H13V14" fill="none" stroke="#77777a" strokeWidth="1.800" />
    </svg>
    <svg width="7" height="5" className="mt-1 ml-[7px]"><path d="M0 0h7L3.500 5z" /></svg>
    <svg width="12" height="9" className="ml-[8px]"><path d="M0 1.500h12M0 7.500h12" stroke="#a9a9ab" strokeWidth="2" /></svg>
    <div className="ml-[6px] h-[22px] w-[1344px] border border-[#ababab] border-t-[#8f8f8f] bg-white" />
    <svg width="14" height="8" className="ml-[6px]"><path d="M0 0h14L7 7.500z" /></svg>
  </div>
);

const Sidebar = () => (
  <div className="mt-0.5 flex w-[46px] shrink-0 flex-col items-center border-l border-[#d0d0d0] pl-[6px]">
    <svg width="11" height="8" className="mt-[10px]"><path d="M0 1h11M0 4h11M0 7h11" stroke="#b5b5b7" strokeWidth="1.200" /></svg>
    <div className={`mt-[9px] h-[31px] w-[31px] rounded-[2px] border border-[#8a929d] bg-[#d5d9e0] ${center}`}>
      <svg width="21" height="22" viewBox="0 0 21 22">
        <rect x="1" y="1" width="19" height="20" rx="2" fill="#fff" stroke="#999" strokeWidth="1.400" />
        <rect x="6.500" y="4" width="8" height="14" fill="#fff" stroke="#77777a" strokeWidth="1.400" />
        <rect x="8" y="5.500" width="5" height="7" fill="#dcdcdc" />
      </svg>
    </div>
    <svg width="24" height="24" viewBox="0 0 24 24" className="mt-[4px]">
      <path d="M2.500 17L8.500 3h1l5 13M5 12h8" fill="none" stroke={G} strokeWidth="2.200" />
      <path d="M21.500 3l1.500 1-7 11-2.500-2z" fill="#fff" stroke="#999" />
      <circle cx="13" cy="17.500" r="4" fill="#f6a623" />
      <path d="M3 20c3 1 5-1 7-1 2 0 3 3.500 1 4-3 .7-7-.500-8-3z" fill="#1a80f5" />
    </svg>
    <svg width="22" height="21" viewBox="0 0 22 21" className="mt-[8px]">
      <rect x=".7" y=".7" width="20.600" height="19.600" fill="#fff" stroke="#999" />
      <rect x="2.500" y="2.500" width="17" height="16" fill="#c5a0bd" />
      <rect x="2.500" y="6" width="17" height="7" fill="#f0a58c" />
      <ellipse cx="11" cy="10" rx="5" ry="3" fill="#f8d28e" />
      <path d="M2.500 12l4-1 4 1.500 4-2 5 1.500v2.500h-17z" fill="#26222a" />
      <path d="M2.500 14.500h17v4h-17z" fill="#d8a6b4" />
    </svg>
    <svg width="22" height="22" viewBox="0 0 22 22" className="mt-[9px]">
      <circle cx="11" cy="11" r="9.300" fill="#6bb5fb" stroke="#2d8df0" strokeWidth="1.600" />
      <path d="M16 6l-3 7-4-4z" fill="#e53434" />
      <path d="M6 16l7-3-4-4z" fill="#fff" />
    </svg>
    <div className="mt-[7px] font-['Liberation_Serif'] text-[25px] leading-none text-[#1a80f5] italic">fx</div>
  </div>
);

const Tabs = () => (
  <div className="flex h-6 shrink-0 items-end text-[10.700px] leading-none">
    <div className="flex h-[23px] items-center pl-[12px]">
      <svg width="88" height="14" viewBox="0 0 88 14" fill="#d0d0d0">
        <path d="M2 0h1.500v14H2zM11 0v14L4 7zM32 0v14l-7-7zM47.500 0v14l7-7zM69 0v14l7-7zM76.500 0H78v14h-1.500z" />
      </svg>
      <svg width="15" height="15" className="ml-2" viewBox="0 0 15 15"><path d="M7.500 0v15M0 7.500h15" stroke="#000" strokeWidth="2.800" /></svg>
    </div>
    <div className={`ml-[10px] h-[23px] w-[72px] border-b-[3px] border-[#8fabd3] bg-white pt-[3px] ${center}`}>Data Entry</div>
    <div className={`h-[23px] w-[146px] bg-[#878787] text-white ${center}`}>Options and Things to Try</div>
    <div className={`h-[23px] w-[58px] bg-[#b1be9b] pr-[4px] ${center}`}>Explore</div>
    <div className={`h-[23px] w-[64px] bg-[#e6c5d1] pr-[3px] ${center}`}>Printouts</div>
    <div className={`h-[23px] w-[69px] bg-[#f4ac43] pr-[3px] ${center}`}>Absences</div>
  </div>
);

const Check = () => <span className="h-[14px] w-[14px] shrink-0 rounded-[3.500px] border border-[#dcdcdc] bg-white shadow-sm" />;

const FindBar = () => (
  <div className="flex h-[35px] items-center bg-[#f6f6f6] pb-[2px] pl-[11px] text-[13px] leading-none">
    <svg width="19" height="19" viewBox="0 0 19 19"><path d="M1 1l17 17M18 1L1 18" stroke="#d8322c" strokeWidth="2" /></svg>
    <div className="ml-[11px] flex h-5 w-[238px] items-center justify-between rounded-[4px] bg-white pr-[2px] pl-[3px] shadow-[0_0.500px_1.500px_rgba(0,0,0,0.35)]">
      <span className="text-[#8c8c8c]">Find</span>
      <Chevron className="h-4 w-[15px]" />
    </div>
    <svg width="18" height="18" className="ml-[13px]"><path d="M9 0l9 18H0z" fill="#b9b9b9" /></svg>
    <svg width="18" height="18" className="ml-[13px]"><path d="M9 18l9-18H0z" fill="#b9b9b9" /></svg>
    <span className="ml-[9px] w-[45px] text-[11px] whitespace-nowrap text-[#999]">Find All</span>
    <Check />
    <span className="ml-[9px] w-[115px] whitespace-nowrap">Formatted Display</span>
    <Check />
    <span className="ml-[9px] w-[72px] whitespace-nowrap">Match Case</span>
    <Sep w={9} />
    <Ico n="find" />
    <Sep w={9} />
  </div>
);

const StatusSep = () => <span className="h-[11px] w-px shrink-0 bg-[#cdcdcd]" />;

const StatusBar = () => (
  <div className="flex h-[17px] items-center border-t border-[#d4d4d4] bg-[#ececec] text-[10.500px] leading-none whitespace-nowrap">
    <span className="w-[211px] pl-[9px]">Sheet 1 of 5</span>
    <StatusSep />
    <span className="w-[276px]" />
    <StatusSep />
    <span className="w-[325px] pl-[7px]">PageStyle_Data Entry</span>
    <StatusSep />
    <span className="w-[230px] pl-px text-center">German (Austria)</span>
    <StatusSep />
    <span className="w-[63px]" />
    <StatusSep />
    <span className="flex w-[35px] justify-center">
      <svg width="18" height="10">
        <path d="M11 2.500H1.500v5H11" fill="none" stroke={B} strokeWidth="1.300" />
        <path d="M14 1v8M12.500 1h3M12.500 9h3" stroke={G} />
      </svg>
    </span>
    <span className="flex w-[20px] justify-center">
      <svg width="10" height="10">
        <path d="M.5.5h9v9h-9zM2.500.5v3.500h5V.5M2.500 9.500V6h5v3.500" fill="none" stroke={G} />
      </svg>
    </span>
    <StatusSep />
    <span className="w-[299px] pl-[30px] text-center">Average: ; Sum: 0</span>
    <StatusSep />
    <svg width="141" height="16" viewBox="0 0 141 16" className="shrink-0">
      <path d="M24 8h95" stroke="#a5a5a5" strokeWidth="1.300" />
      <path d="M71.500 5v6" stroke="#8c8c8c" strokeWidth="1.500" />
      <circle cx="13.500" cy="8.500" r="7" fill="#fff" stroke="#b5b5b5" />
      <circle cx="130.500" cy="8.500" r="7" fill="#fff" stroke="#b5b5b5" />
      <path d="M9 8.500h9M126 8.500h9M130.500 4v9" stroke="#6d6d6d" />
      <path d="M43 2.500h11V10l-3 3.500h-5L43 10z" fill="#fff" stroke="#b5b5b5" />
    </svg>
    <StatusSep />
    <span className="pl-[9px]">60%</span>
  </div>
);

export default function App() {
  return (
    <div className="h-[869px] w-[1774px] overflow-hidden bg-white pt-[38px] pl-[56px] font-['Liberation_Sans',sans-serif] text-black">
      <div className="flex h-[757px] w-[1662px] flex-col overflow-hidden rounded-[10px] bg-[#efefef] shadow-[0_0_0_1px_rgba(0,0,0,0.16),0_16px_42px_rgba(0,0,0,0.48)]">
        <div className="flex h-[29px] shrink-0 items-center border-b border-[#c9c9c9] bg-[#fcfcfc] pb-px">
          <div className="flex w-[752px] gap-2 pl-2">
            <span className="h-3 w-3 rounded-full border border-[#e0443e] bg-[#f95f57]" />
            <span className="h-3 w-3 rounded-full border border-[#e09f28] bg-[#fcbb2e]" />
            <span className="h-3 w-3 rounded-full border border-[#2fae2f] bg-[#35c63c]" />
          </div>
          <svg width="15" height="16" viewBox="0 0 15 16">
            <path d="M4 .5h7.500l3 3v12H4z" fill="#fff" stroke="#c5c5c5" />
            <path d="M9 5h4M9 8h4M9 11h4" stroke="#1f8a4a" strokeWidth="1.400" />
            <path d="M0 3.500h8v9H0z" fill="#1d7f45" />
            <path d="M2.200 5.500l3.600 5M5.800 5.500l-3.600 5" stroke="#fff" strokeWidth="1.200" />
          </svg>
          <span className="ml-[5px] font-['Inter'] text-[13.250px] leading-none font-semibold text-[#4b4b4b]">ExcelGradeBook.xlsx</span>
        </div>
        <Toolbars />
        <div className="flex h-[608px] shrink-0">
          <div className="flex w-[1616px] shrink-0 flex-col">
            <FormulaBar />
            <div className="flex h-[535px] shrink-0">
              <div className="relative ml-px flex w-[1600px] shrink-0 overflow-hidden bg-white">
                <RowHeads />
                <div className="w-[1568px] shrink-0">
                  <TopRows />
                  <DataRows />
                </div>
                <Notes />
                <div className="absolute top-0 left-[241.500px] h-full w-[1.500px] bg-black" />
              </div>
              <div className="flex flex-1 justify-center border-l border-[#ececec] bg-[#fafafa]">
                <div className="mt-[69px] h-[226px] w-2 rounded-full bg-[#c3c3c3]" />
              </div>
            </div>
            <div className="flex h-[13px] w-[1601px] shrink-0 items-center border-t border-[#e5e5e5] bg-[#fafafa] pl-px">
              <div className="h-2 w-[584px] rounded-full bg-[#c6c6c6]" />
            </div>
            <Tabs />
          </div>
          <div className="relative flex">
            <Sidebar />
            <div className={`absolute top-[268px] left-0 h-[73px] w-[6.500px] bg-[#8e8e8e] ${center}`}>
              <svg width="5" height="8"><path d="M0 0l5 4-5 4z" fill="#fff" /></svg>
            </div>
          </div>
        </div>
        <FindBar />
        <StatusBar />
      </div>
    </div>
  );
}
